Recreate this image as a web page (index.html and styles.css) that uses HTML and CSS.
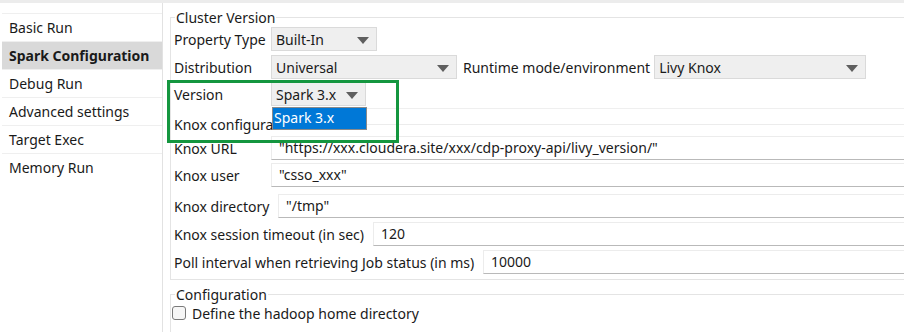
FILE: index.html
```html
<!DOCTYPE html>
<html>
<head>
<meta charset="utf-8">
<link rel="stylesheet" href="styles.css">
</head>
<body>
<div class="topstrip"></div>
<div class="main">
  <nav class="nav">
    <div class="nav-item">Basic Run</div>
    <div class="nav-item selected">Spark Configuration</div>
    <div class="nav-item">Debug Run</div>
    <div class="nav-item">Advanced settings</div>
    <div class="nav-item">Target Exec</div>
    <div class="nav-item">Memory Run</div>
  </nav>
  <div class="content">
    <fieldset class="group cluster">
      <legend>Cluster Version</legend>
      <div class="row r-prop">
        <span class="lbl w-prop">Property Type</span>
        <div class="combo c-builtin"><span>Built-In</span><i class="arrow"></i></div>
      </div>
      <div class="row r-dist">
        <span class="lbl w-std">Distribution</span>
        <div class="combo c-universal"><span>Universal</span><i class="arrow"></i></div>
        <span class="lbl rt">Runtime mode/environment</span>
        <div class="combo c-livy"><span>Livy Knox</span><i class="arrow"></i></div>
      </div>
      <div class="row r-ver">
        <span class="lbl w-std">Version</span>
        <div class="combo c-spark"><span>Spark 3.x</span><i class="arrow"></i>
          <div class="dropdown">Spark 3.x</div>
        </div>
        <div class="fill-line"></div>
      </div>
      <div class="knox-head">
        <span class="lbl knox-lbl">Knox configuration</span>
        <div class="head-line"></div>
      </div>
      <div class="row r-url">
        <span class="lbl w-std">Knox URL</span>
        <div class="field wide">"https://xxx.cloudera.site/xxx/cdp-proxy-api/livy_version/"</div>
      </div>
      <div class="row r-user">
        <span class="lbl w-std">Knox user</span>
        <div class="field req">"csso_xxx"</div>
        <span class="star">*</span>
      </div>
      <div class="row r-dir">
        <span class="lbl w-dir">Knox directory</span>
        <div class="field wide">"/tmp"</div>
      </div>
      <div class="row r-sess">
        <span class="lbl w-sess">Knox session timeout (in sec)</span>
        <div class="field wide">120</div>
      </div>
      <div class="row r-poll">
        <span class="lbl w-poll">Poll interval when retrieving Job status (in ms)</span>
        <div class="field req">10000</div>
        <span class="star">*</span>
      </div>
    </fieldset>
    <fieldset class="group config">
      <legend>Configuration</legend>
      <label class="check"><span class="box"></span>Define the hadoop home directory</label>
      <label class="check"><span class="box"></span>Define the Spark home directory</label>
    </fieldset>
    <div class="highlight"></div>
  </div>
</div>
</body>
</html>
```
FILE: styles.css
```css
html, body {
  margin: 0;
  padding: 0;
  width: 904px;
  height: 332px;
  overflow: hidden;
  background: #ffffff;
  font-family: "Noto Sans", "Open Sans", sans-serif;
  font-size: 14px;
  color: #1a1a1a;
}
.topstrip {
  height: 3px;
  background: #ececec;
}
.main {
  display: flex;
  height: 329px;
}
.nav {
  width: 162px;
  border-right: 1px solid #e2e2e2;
  padding-top: 10px;
  flex: none;
}
.nav-item {
  height: 27px;
  line-height: 27px;
  padding-left: 7px;
  margin-left: 2px;
  border-top: 1px solid #efefef;
  white-space: nowrap;
}
.nav-item.selected {
  background: #d9d9d9;
  font-weight: bold;
}
.content {
  position: relative;
  flex: none;
  width: 760px;
  padding-left: 7px;
  padding-top: 5px;
}
.group {
  margin: 0;
  border: 1px solid #e4e4e4;
  border-right: none;
  padding: 0 0 5px 3px;
  width: 740px;
}
.group legend {
  padding: 0 1px;
  margin-left: 1px;
  line-height: 20px;
  height: 19px;
}
.row {
  display: flex;
  align-items: center;
  height: 24px;
  margin-top: 4px;
  white-space: nowrap;
}
.r-prop { margin-top: 0; }
.r-ver { margin-top: 3px; }
.lbl {
  flex: none;
  white-space: nowrap;
}
.w-prop { width: 97px; }
.w-std { width: 97px; }
.w-dir { width: 104px; }
.w-sess { width: 199px; }
.w-poll { width: 309px; }
.combo {
  position: relative;
  flex: none;
  border: 1px solid #dadada;
  background: #efefef;
  display: flex;
  align-items: center;
  padding-left: 4px;
  box-sizing: border-box;
  height: 24px;
}
.combo .arrow {
  position: absolute;
  right: 7px;
  top: 9px;
  width: 0;
  height: 0;
  border-left: 6px solid transparent;
  border-right: 6px solid transparent;
  border-top: 7px solid #5f5f5f;
}
.c-builtin { width: 106px; }
.c-universal { width: 186px; }
.c-livy { width: 212px; }
.c-spark { width: 95px; }
.rt { margin: 0 4px 0 6px; }
.dropdown {
  position: absolute;
  left: 0;
  top: 24px;
  width: 95px;
  height: 23px;
  box-sizing: border-box;
  border: 1px solid #8a8a8a;
  background: #0078d7;
  color: #ffffff;
  line-height: 20px;
  padding-left: 1px;
  z-index: 3;
}
.fill-line {
  align-self: flex-end;
  flex: 1;
  height: 1px;
  background: #efefef;
  margin-bottom: -3px;
}
.knox-head {
  display: flex;
  align-items: flex-end;
  height: 30px;
}
.knox-lbl {
  line-height: 20px;
  margin-bottom: 1px;
}
.head-line {
  align-self: flex-start;
  margin-top: 18px;
  flex: 1;
  height: 1px;
  background: #ececec;
  margin-left: 4px;
}
.field {
  flex: none;
  height: 24px;
  box-sizing: border-box;
  border: 1px solid #ececec;
  border-bottom-color: #b9b9b9;
  line-height: 22px;
  padding-left: 7px;
  background: #fff;
}
.wide { flex: 1; }
.req { flex: 1; margin-right: 3px; }
.r-user .field, .r-poll .field { border-right-color: #dcdcdc; }
.star {
  color: #4b6f9a;
  font-size: 10px;
  line-height: 10px;
  align-self: flex-start;
  margin-top: 2px;
  width: 6px;
}
.r-url { margin-top: 0; }
.r-user { margin-top: 3px; }
.r-dir { margin-top: 7px; }
.config {
  margin-top: 5px;
  padding-top: 0;
}
.check {
  display: flex;
  align-items: center;
  height: 24px;
  gap: 6px;
  margin-top: -3px;
}
.check + .check { margin-top: 2px; }
.box {
  width: 12px;
  height: 12px;
  border: 1px solid #7a7a7a;
  border-radius: 3px;
  background: #f6f6f6;
  margin-left: -2px;
}
.highlight {
  position: absolute;
  left: 4px;
  top: 77px;
  width: 226px;
  height: 57px;
  border: 3px solid #14963f;
  z-index: 4;
  pointer-events: none;
}
```
